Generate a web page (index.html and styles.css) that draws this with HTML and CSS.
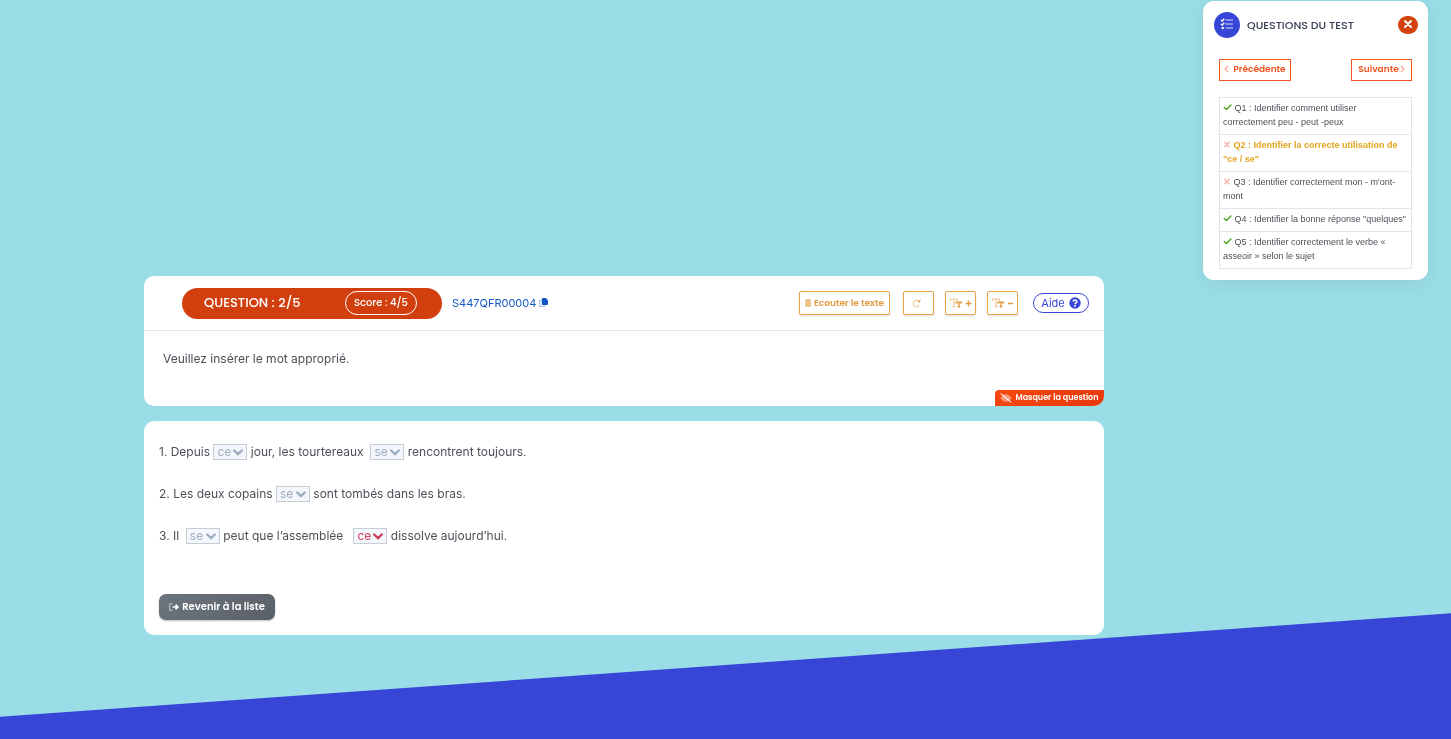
FILE: index.html
```html
<!DOCTYPE html>
<html lang="fr">
<head>
    <meta charset="UTF-8">
    <meta name="viewport" content="width=device-width, initial-scale=1.0">
    <title>Questions du test</title>
    <link rel="stylesheet" href="styles.css">
</head>
<body>
    <svg class="sprite" width="0" height="0" aria-hidden="true">
        <symbol id="chevron" viewBox="0 0 10 7"><path d="M1.2 1.5 L5 5.2 L8.8 1.5" fill="none" stroke="currentColor" stroke-width="2.4" stroke-linecap="round"/></symbol>
        <symbol id="check" viewBox="0 0 8 7"><path d="M.7 3.5 L3 5.6 L7.4 1.1" fill="none" stroke="currentColor" stroke-width="1.4" stroke-linecap="round" stroke-linejoin="round"/></symbol>
        <symbol id="cross" viewBox="0 0 8 8"><path d="M1.5 1.5 L6.5 6.5 M6.5 1.5 L1.5 6.5" fill="none" stroke="currentColor" stroke-width="1.5" stroke-linecap="round"/></symbol>
        <symbol id="text-size" viewBox="0 0 12 10">
            <path d="M.6 3 V1.1 H7.4 V3 M4 1.1 V8.7 M2.5 8.7 H5.5" fill="none" stroke="currentColor" stroke-width="1.2" opacity=".5"/>
            <path d="M6.3 5.8 V4.3 H11.5 V5.8 M8.9 4.3 V8.7 M7.6 8.7 H10.2" fill="none" stroke="currentColor" stroke-width="1.4"/>
        </symbol>
    </svg>

    <div class="page">
        <main class="content">
            <section class="card">
                <header class="toolbar">
                    <div class="banner">
                        <h1>QUESTION : 2/5</h1>
                        <span class="score">Score : 4/5</span>
                    </div>
                    <a class="reference" href="#">S447QFR00004
                        <svg width="9" height="9" viewBox="0 0 9 9"><path d="M2.3 2.4 H.8 V8.3 H5.6 V7.4" fill="none" stroke="currentColor" opacity=".45"/><path d="M3.8 0 H6.8 L9 2.2 V6 Q9 7 8 7 H3.8 Q2.8 7 2.8 6 V1 Q2.8 0 3.8 0Z" fill="currentColor"/></svg>
                    </a>
                    <div class="tools">
                        <button type="button" class="tool tool-listen">
                            <svg width="6" height="8" viewBox="0 0 6 8"><rect width="6" height="8" rx=".8" fill="currentColor" opacity=".5"/><path d="M2 1.5 H4" stroke="currentColor"/><circle cx="3" cy="5" r="1.5" fill="#fbe6cd" stroke="currentColor" stroke-width=".8"/></svg>
                            Ecouter le texte
                        </button>
                        <button type="button" class="tool tool-reload" aria-label="Recommencer">
                            <svg width="9" height="9" viewBox="0 0 9 9"><path d="M6.8 2.2 A3.3 3.3 0 1 0 7.3 6.4" fill="none" stroke="currentColor" stroke-width="1.2" opacity=".5"/><path d="M8.3 .5 V3.3 H5.4Z" fill="currentColor"/></svg>
                        </button>
                        <button type="button" class="tool" aria-label="Agrandir le texte">
                            <svg width="12" height="10"><use href="#text-size"/></svg>
                            <svg width="7" height="7" viewBox="0 0 7 7"><path d="M.5 3.5 H6.5 M3.5 .5 V6.5" stroke="currentColor" stroke-width="1.4"/></svg>
                        </button>
                        <button type="button" class="tool" aria-label="Réduire le texte">
                            <svg width="12" height="10"><use href="#text-size"/></svg>
                            <svg width="7" height="7" viewBox="0 0 7 7"><path d="M1 3.5 H6" stroke="currentColor" stroke-width="1.4"/></svg>
                        </button>
                    </div>
                    <button type="button" class="help">Aide
                        <svg width="12" height="12" viewBox="0 0 12 12"><circle cx="6" cy="6" r="5.7" fill="currentColor"/><path d="M4.2 4.6 C4.3 2.4 7.9 2.5 7.8 4.7 C7.7 5.9 6 5.8 6 7.2" fill="none" stroke="#fff" stroke-width="1.5"/><circle cx="6" cy="9" r=".9" fill="#fff"/></svg>
                    </button>
                </header>
                <p class="instruction">Veuillez insérer le mot approprié.</p>
                <button type="button" class="hide-question">
                    <svg width="12" height="10" viewBox="0 0 12 10"><path d="M.5 5 Q3 1.2 6 1.2 T11.5 5 Q9 8.8 6 8.8 T.5 5Z" fill="currentColor" opacity=".45"/><path d="M.8 .6 L11.2 9.4" stroke="currentColor" stroke-width="1.1"/></svg>
                    Masquer la question
                </button>
            </section>

            <section class="card exercise">
                <p>1. Depuis
                    <span class="choice"><select aria-label="Mot 1" disabled><option>ce</option><option>se</option></select><svg width="10" height="7"><use href="#chevron"/></svg></span>
                    jour, les tourtereaux&nbsp;
                    <span class="choice"><select aria-label="Mot 2" disabled><option>se</option><option>ce</option></select><svg width="10" height="7"><use href="#chevron"/></svg></span>
                    rencontrent toujours.</p>
                <p>2. Les deux copains
                    <span class="choice"><select aria-label="Mot 3" disabled><option>se</option><option>ce</option></select><svg width="10" height="7"><use href="#chevron"/></svg></span>
                    sont tombés dans les bras.</p>
                <p>3. Il&nbsp;
                    <span class="choice"><select aria-label="Mot 4" disabled><option>se</option><option>ce</option></select><svg width="10" height="7"><use href="#chevron"/></svg></span>
                    peut que l’assemblée&nbsp;&nbsp;
                    <span class="choice wrong"><select aria-label="Mot 5" disabled><option>ce</option><option>se</option></select><svg width="10" height="7"><use href="#chevron"/></svg></span>
                    dissolve aujourd’hui.</p>
                <button type="button" class="back">
                    <svg width="10" height="8" viewBox="0 0 10 8"><path d="M3.3 .6 H1.6 Q.6 .6 .6 1.6 V6.4 Q.6 7.4 1.6 7.4 H3.3" fill="none" stroke="currentColor" stroke-width="1.1" opacity=".55"/><path d="M3.5 4 H8.8 M6.5 1.7 L8.9 4 L6.5 6.3" fill="none" stroke="currentColor" stroke-width="1.6"/></svg>
                    Revenir à la liste
                </button>
            </section>
        </main>

        <aside class="panel">
            <div class="panel-head">
                <span class="panel-icon">
                    <svg width="14" height="12" viewBox="0 0 14 12"><path d="M1 2 L2.2 3 L4.3 .8 M1 6 L2.2 7 L4.3 4.8" fill="none" stroke="#fff" stroke-width="1.3"/><circle cx="2.7" cy="10" r="1.2" fill="#fff"/><path d="M5.5 2 H13 M5.5 6 H13 M5.5 10 H13" stroke="#fff" stroke-width="1.4" opacity=".55"/></svg>
                </span>
                <h2>QUESTIONS DU TEST</h2>
                <button type="button" class="close" aria-label="Fermer">
                    <svg width="10" height="10" viewBox="0 0 10 10"><path d="M2 2 L8 8 M8 2 L2 8" stroke="#fff" stroke-width="2" stroke-linecap="round"/></svg>
                </button>
            </div>
            <nav class="pager">
                <a href="#"><svg width="5" height="8" viewBox="0 0 5 8"><path d="M4 1 L1 4 L4 7" fill="none" stroke="currentColor" stroke-width="1.2" opacity=".5"/></svg>Précédente</a>
                <a href="#" class="next">Suivante<svg width="5" height="8" viewBox="0 0 5 8"><path d="M1 1 L4 4 L1 7" fill="none" stroke="currentColor" stroke-width="1.2" opacity=".5"/></svg></a>
            </nav>
            <ul class="questions">
                <li><svg class="ok" width="9" height="7"><use href="#check"/></svg> Q1 : Identifier comment utiliser correctement peu - peut -peux</li>
                <li class="current"><svg class="ko" width="8" height="7"><use href="#cross"/></svg> Q2 : Identifier la correcte utilisation de "ce / se"</li>
                <li><svg class="ko" width="8" height="7"><use href="#cross"/></svg> Q3 : Identifier correctement mon - m'ont-mont</li>
                <li><svg class="ok" width="9" height="7"><use href="#check"/></svg> Q4 : Identifier la bonne réponse "quelques"</li>
                <li><svg class="ok" width="9" height="7"><use href="#check"/></svg> Q5 : Identifier correctement le verbe « asseoir » selon le sujet</li>
            </ul>
        </aside>
    </div>
</body>
</html>
```
FILE: styles.css
```css
* {
    box-sizing: border-box;
}
body {
    margin: 0;
    min-height: 100vh;
    font-family: Inter, "Liberation Sans", sans-serif;
    font-size: 12px;
    color: #4b5058;
    background-color: #9adde6;
}
/* slanted blue footer */
body::before {
    content: "";
    position: fixed;
    inset: 0;
    z-index: -1;
    background-color: #3846d8;
    clip-path: polygon(0 97%, 100% 83%, 100% 100%, 0 100%);
}
h1, h2, p, ul {
    margin: 0;
    padding: 0;
}
button {
    font-family: inherit;
    cursor: pointer;
}
a {
    text-decoration: none;
}
.sprite {
    position: absolute;
}
.page {
    display: grid;
    grid-template-columns: minmax(0, 1fr) 225px;
    gap: 99px;
    align-items: start;
    padding: 0 23px 0 144px;
}
.content {
    display: grid;
    gap: 15px;
    padding-top: 276px;
}
.card {
    display: flex;
    flex-direction: column;
    background-color: #fff;
    border-radius: 10px;
    overflow: hidden;
}
.toolbar {
    display: flex;
    align-items: center;
    height: 55px;
    padding: 0 15px 0 38px;
    border-bottom: 1px solid #dfe6ee;
}
.banner {
    display: flex;
    align-items: center;
    justify-content: space-between;
    width: 260px;
    height: 31px;
    padding: 0 25px 0 22px;
    border-radius: 16px;
    background-color: #d13f0e;
    color: #fff;
}
.banner h1 {
    font-family: Poppins, Inter, sans-serif;
    font-size: 13px;
    font-weight: 500;
}
.score {
    display: flex;
    align-items: center;
    height: 24px;
    padding: 0 8px;
    border: 1px solid #fff;
    border-radius: 12px;
    font-family: Poppins, Inter, sans-serif;
    font-size: 10px;
    font-weight: 500;
}
.reference {
    margin-left: 10px;
    color: #1257c4;
    font-size: 11px;
}
.tools {
    display: flex;
    gap: 11px;
    margin-left: auto;
}
.tool {
    display: flex;
    align-items: center;
    justify-content: center;
    gap: 3px;
    width: 31px;
    height: 24px;
    padding: 0;
    border: 1px solid #e8a348;
    border-radius: 2px;
    background-color: #fff;
    box-shadow: 0 1px 2px #0002;
    color: #e29a43;
    font-family: Poppins, Inter, sans-serif;
    font-size: 9px;
    font-weight: 600;
}
.tool-listen {
    width: 91px;
    margin-right: 2px;
}
.tool-reload {
    padding-right: 4px;
}
.help {
    display: flex;
    align-items: center;
    justify-content: center;
    gap: 4px;
    width: 56px;
    height: 20px;
    margin-left: 15px;
    padding: 0;
    border: 1px solid #3846d8;
    border-radius: 10px;
    background-color: #fff;
    color: #3846d8;
    font-size: 11px;
}
.instruction {
    padding: 20px 19px 0;
    line-height: 16px;
}
.hide-question {
    display: flex;
    align-items: center;
    align-self: flex-end;
    justify-content: center;
    gap: 3px;
    width: 109px;
    height: 16px;
    margin-top: 23px;
    padding: 0;
    border: 0;
    border-radius: 4px 0 0 0;
    background-image: linear-gradient(135deg, #f5480f, #e8380d);
    color: #fff;
    font-family: Poppins, Inter, sans-serif;
    font-size: 8px;
    font-weight: 600;
}
.exercise {
    gap: 26px;
    padding: 23px 15px 15px;
}
.exercise p {
    line-height: 16px;
}
.choice {
    position: relative;
    display: inline-block;
    height: 16px;
    color: #9fadc0;
    vertical-align: top;
}
.choice select {
    appearance: none;
    display: block;
    width: 34px;
    height: 16px;
    padding: 0 3px;
    border: 1px solid #c6cdd2;
    border-radius: 0;
    background-color: #f3f7fb;
    color: inherit;
    font-family: inherit;
    font-size: 12px;
    line-height: 14px;
    opacity: 1;
}
.choice svg {
    position: absolute;
    top: 5px;
    right: 4px;
    pointer-events: none;
}
.wrong {
    color: #d03f5b;
}
.back {
    display: flex;
    align-items: center;
    align-self: flex-start;
    justify-content: center;
    gap: 3px;
    width: 116px;
    height: 26px;
    margin-top: 24px;
    padding: 0;
    border: 0;
    border-radius: 7px;
    background-image: linear-gradient(135deg, #6c757d, #5a6068);
    box-shadow: 0 1px 2px #0004;
    color: #fff;
    font-family: Poppins, Inter, sans-serif;
    font-size: 10px;
    font-weight: 600;
}
.panel {
    margin-top: 1px;
    padding: 11px 10px;
    border-radius: 11px;
    background-color: #fff;
    box-shadow: 0 4px 22px #0001;
}
.panel-head {
    display: flex;
    align-items: center;
    gap: 7px;
    padding-left: 1px;
}
.panel-icon {
    display: flex;
    align-items: center;
    justify-content: center;
    width: 26px;
    height: 26px;
    padding-bottom: 2px;
    border-radius: 50%;
    background-color: #3846d8;
}
.panel h2 {
    flex: 1;
    color: #363f52;
    font-family: Poppins, Inter, sans-serif;
    font-size: 11px;
    font-weight: 500;
}
.close {
    display: flex;
    align-items: center;
    justify-content: center;
    width: 20px;
    height: 18px;
    padding: 0 0 2px;
    border: 0;
    border-radius: 9px;
    background-color: #d4430f;
}
.pager {
    display: flex;
    justify-content: space-between;
    margin: 21px 6px 16px;
}
.pager a {
    display: flex;
    align-items: center;
    justify-content: center;
    gap: 4px;
    width: 72px;
    height: 22px;
    padding-bottom: 2px;
    border: 1px solid #f0521f;
    color: #f0521f;
    font-family: Poppins, Inter, sans-serif;
    font-size: 9px;
    font-weight: 600;
}
.pager .next {
    gap: 1px;
    width: 61px;
}
.questions {
    margin: 0 6px;
    border: 1px solid #dee5ed;
    font-family: "Liberation Sans", Arial, sans-serif;
    font-size: 9px;
    line-height: 14px;
    list-style: none;
}
.questions li {
    padding: 3px 0 5px 3px;
}
.questions li + li {
    border-top: 1px solid #dee5ed;
}
.current {
    color: #e2a51e;
    font-weight: 700;
}
.ok {
    color: #47a51c;
}
.ko {
    color: #f2b3a4;
}
```
